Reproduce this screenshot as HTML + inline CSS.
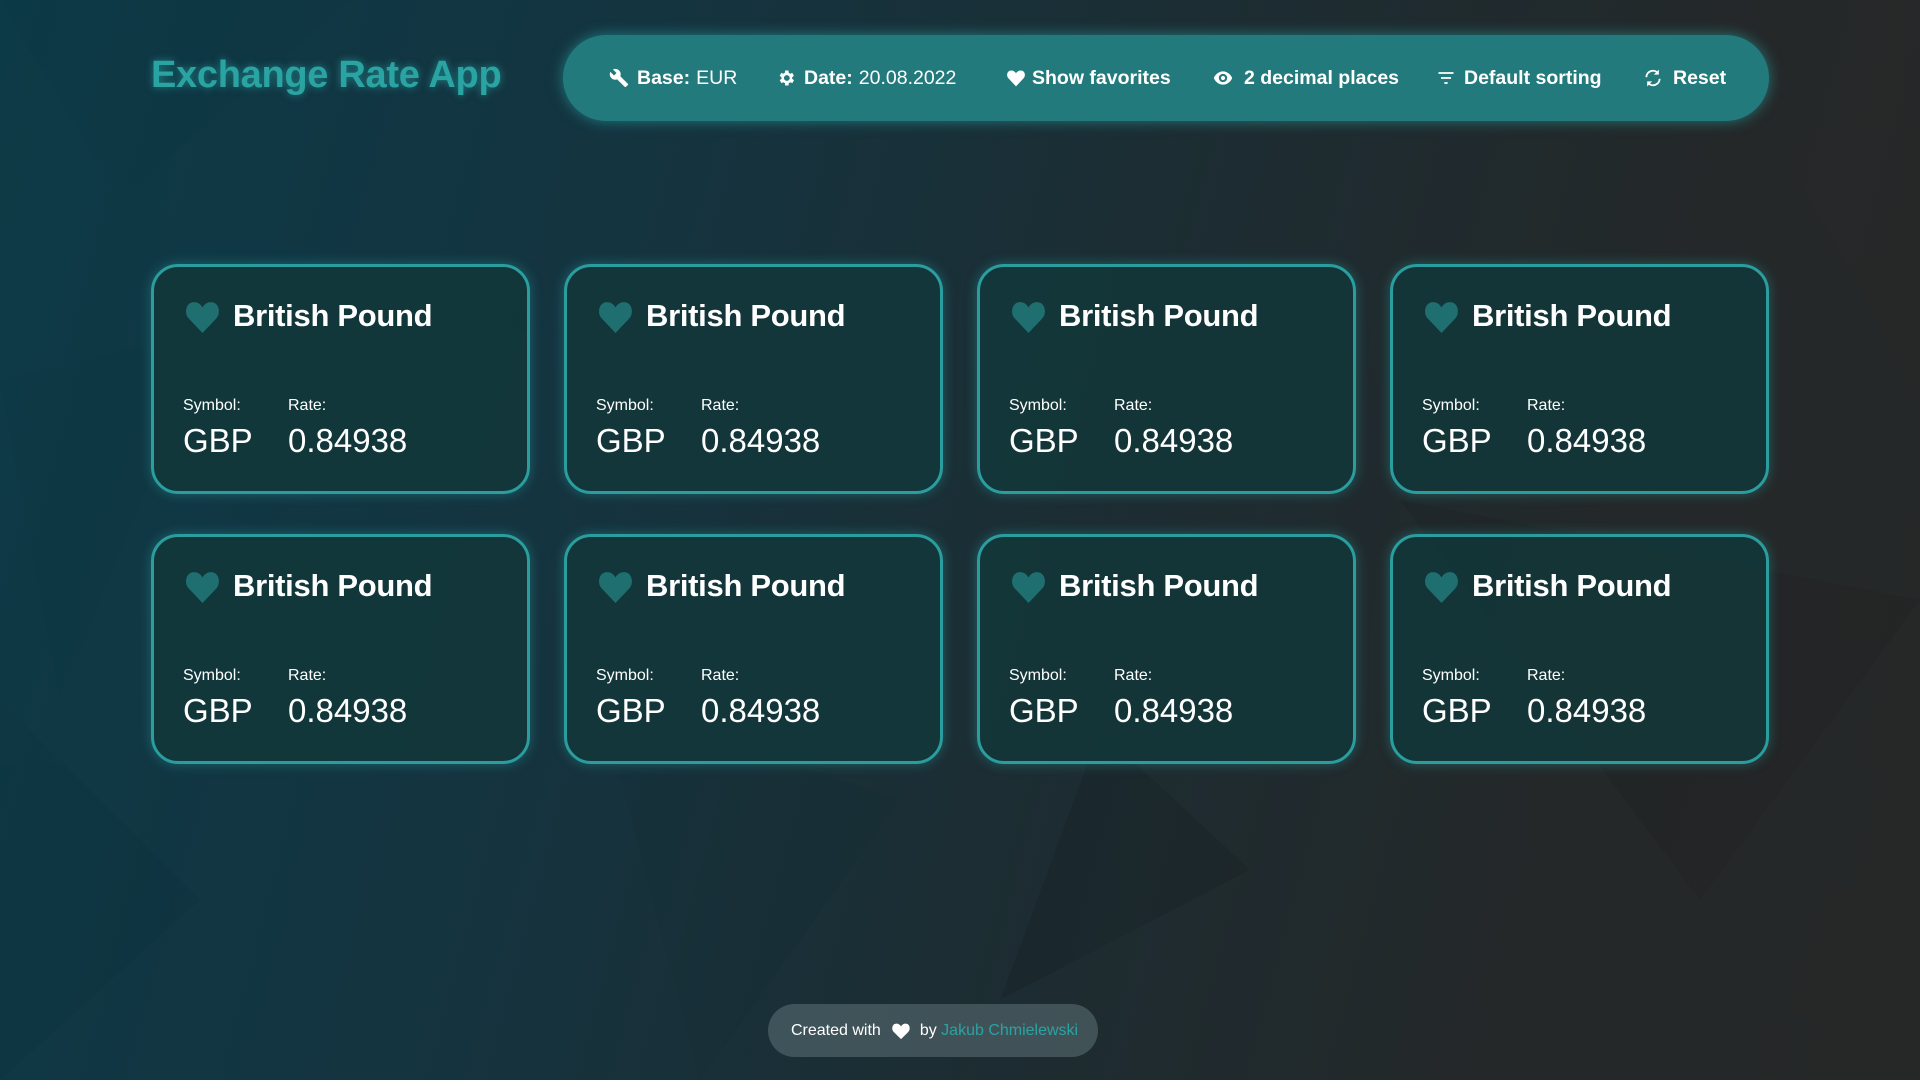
<!DOCTYPE html>
<html><head><meta charset="utf-8"><style>
*{margin:0;padding:0;box-sizing:border-box}
body{width:1920px;height:1080px;overflow:hidden;font-family:"Liberation Sans",sans-serif;color:#fff;position:relative;
background:linear-gradient(105deg,#0d3a47 0%,#143440 30%,#1c2d33 55%,#242829 80%,#262828 100%);}
svg.bg{position:absolute;left:0;top:0}
.title{position:absolute;left:151px;top:54px;font-size:38px;font-weight:bold;color:#2aa3a3;text-shadow:0 0 8px rgba(42,163,163,.7);letter-spacing:-0.3px}
.nav{position:absolute;left:563px;top:35px;width:1206px;height:86px;border-radius:43px;background:#237a7c;box-shadow:0 0 14px rgba(42,170,170,.6)}
.it{position:absolute;top:0;height:86px;display:flex;align-items:center;font-size:19.5px;white-space:nowrap}
.it b{margin-right:6px}
.it svg{position:absolute;top:33px}
.card{position:absolute;width:379px;height:230px;border:3px solid #2a9d9f;border-radius:27px;background:rgba(18,55,58,.85);box-shadow:0 0 12px rgba(42,160,160,.45)}
.card .h{position:absolute;left:30px;top:32px}
.card .n{position:absolute;left:79px;top:31px;font-size:31px;font-weight:bold;letter-spacing:-0.3px}
.card .l{position:absolute;top:130px;font-size:16px}
.card .v{position:absolute;top:155px;font-size:33px}
.foot{position:absolute;left:768px;top:1004px;width:330px;height:53px;border-radius:27px;background:rgba(100,120,125,.5);font-size:16px;display:flex;align-items:center}
</style></head><body>
<svg class="bg" width="1920" height="1080">
<g opacity="0.08">
<polygon points="0,0 350,0 120,200" fill="#0a3440"/>
<polygon points="0,380 210,330 60,700" fill="#08303c"/>
<polygon points="120,200 560,330 210,330" fill="#0f4350"/>
<polygon points="1100,730 1250,870 1000,1000" fill="#000"/>
<polygon points="1700,0 1920,0 1920,400" fill="#333"/>
<polygon points="0,700 200,900 0,1080" fill="#062a36"/>
<polygon points="1400,500 1920,600 1700,900" fill="#111"/>
<polygon points="600,700 900,800 700,1080" fill="#0a2a30"/>
</g></svg>
<div class="title">Exchange Rate App</div>
<div class="nav">
 <div class="it" style="left:74px"><svg width="20" height="20" viewBox="0 0 24 24" style="left:-28px"><path fill="#fff" d="M22.7 19l-9.1-9.1c.9-2.3.4-5-1.5-6.9-2-2-5-2.4-7.4-1.3L9 6 6 9 1.6 4.7C.4 7.1.9 10.1 2.9 12.1c1.9 1.9 4.6 2.4 6.9 1.5l9.1 9.1c.4.4 1 .4 1.4 0l2.3-2.3c.5-.4.5-1.1.1-1.4z"/></svg><b>Base:</b>EUR</div>
 <div class="it" style="left:241px"><svg width="20" height="20" viewBox="0 0 24 24" style="left:-28px"><path fill="#fff" d="M19.4 13a7.5 7.5 0 000-2l2.1-1.6-2-3.5-2.5 1a7 7 0 00-1.7-1L15 3h-4l-.4 2.9a7 7 0 00-1.7 1l-2.5-1-2 3.5L6.6 11a7.5 7.5 0 000 2l-2.1 1.6 2 3.5 2.5-1a7 7 0 001.7 1L11 21h4l.4-2.9a7 7 0 001.7-1l2.5 1 2-3.5zM13 15.5a3.5 3.5 0 110-7 3.5 3.5 0 010 7z"/></svg><b>Date:</b>20.08.2022</div>
 <div class="it" style="left:469px"><svg width="20" height="20" viewBox="0 0 24 24" style="left:-26px"><path fill="#fff" d="M12 22L3 12.5C0 9.5 1 3 6.5 3 9 3 11 4.5 12 6.5 13 4.5 15 3 17.5 3 23 3 24 9.5 21 12.5z"/></svg><b>Show favorites</b></div>
 <div class="it" style="left:681px"><svg width="22" height="20" viewBox="0 0 24 24" style="left:-32px"><path fill="#fff" d="M12 4C6 4 2 9 1 12c1 3 5 8 11 8s10-5 11-8c-1-3-5-8-11-8zm0 13a5 5 0 110-10 5 5 0 010 10zm0-7.5a2.5 2.5 0 100 5 2.5 2.5 0 000-5z"/></svg><b>2 decimal places</b></div>
 <div class="it" style="left:901px"><svg width="20" height="20" viewBox="0 0 24 24" style="left:-28px"><path stroke="#fff" stroke-width="2" d="M3 6h18M6 12h12M10 18h4"/></svg><b>Default sorting</b></div>
 <div class="it" style="left:1110px"><svg width="20" height="20" viewBox="0 0 24 24" style="left:-30px"><path fill="none" stroke="#fff" stroke-width="2.2" d="M4 11a8 8 0 0114-5M20 13a8 8 0 01-14 5"/><path fill="#fff" d="M19 2v6h-6zM5 22v-6h6z"/></svg><b>Reset</b></div>
</div>
<div id="cards"></div>
<div class="foot"><span style="margin-left:23px">Created with</span><svg width="20" height="18" viewBox="0 0 24 22" style="margin:0 9px 0 10px"><path fill="#fff" d="M12 21L3 12C0 9 1 2 6.5 2 9 2 11 3.5 12 5.5 13 3.5 15 2 17.5 2 23 2 24 9 21 12z"/></svg><span>by&nbsp;</span><span style="color:#2aa3a3">Jakub Chmielewski</span></div>
<script>
var xs=[151,564,977,1390],ys=[264,534],h='';
ys.forEach(function(y){xs.forEach(function(x){h+='<div class="card" style="left:'+x+'px;top:'+y+'px"><svg class="h" width="37" height="34" viewBox="0 0 24 22"><path fill="#1f6e70" d="M12 22L3 12.5C0 9.5 1 2 6.5 2 9 2 11 3.5 12 5.5 13 3.5 15 2 17.5 2 23 2 24 9.5 21 12.5z"/></svg><div class="n">British Pound</div><div class="l" style="left:29px">Symbol:</div><div class="l" style="left:134px">Rate:</div><div class="v" style="left:29px">GBP</div><div class="v" style="left:134px">0.84938</div></div>';});});
document.getElementById('cards').innerHTML=h;
</script>
</body></html>
